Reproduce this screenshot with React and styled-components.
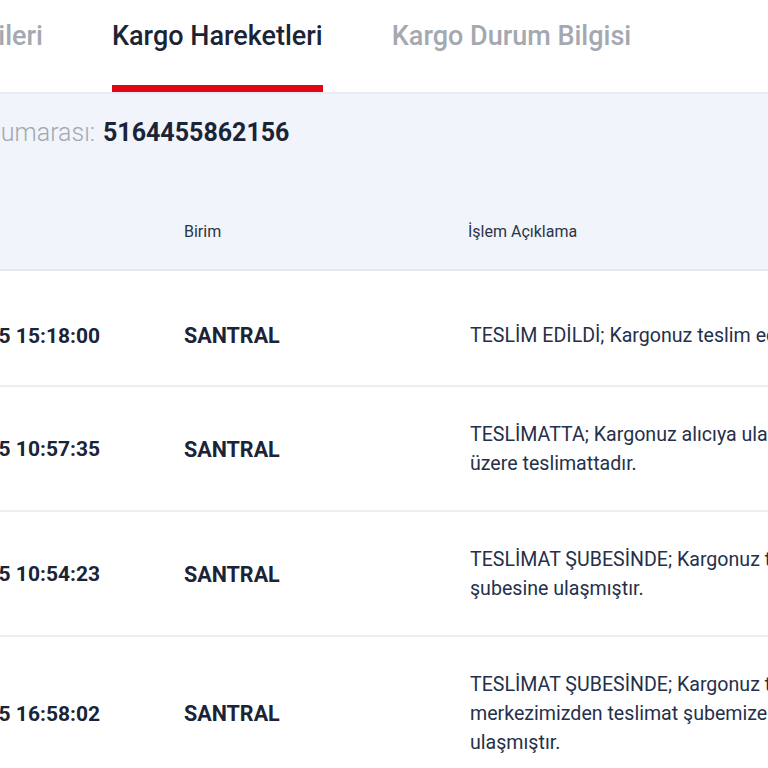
import React from "react";
import styled, { createGlobalStyle } from "styled-components";

const GlobalStyle = createGlobalStyle`
  html, body {
    margin: 0;
    padding: 0;
    background: #ffffff;
    overflow: hidden;
  }
  body {
    font-family: Roboto, "Noto Sans", sans-serif;
    color: #1b2437;
  }
`;

const Page = styled.div`
  width: 768px;
  height: 768px;
  overflow: hidden;
  display: flex;
  flex-direction: column;

  & > * {
    flex-shrink: 0;
  }
`;

const TabBar = styled.div`
  display: flex;
  gap: 69px;
  height: 92px;
  background: #ffffff;
  border-bottom: 2px solid #e8ebf1;
`;

const Tab = styled.div`
  height: 92px;
  box-sizing: border-box;
  display: flex;
  justify-content: ${(p) => (p.$cut ? "flex-end" : "flex-start")};
  width: ${(p) => (p.$cut ? "43px" : "auto")};
  padding-top: 20px;
  white-space: nowrap;
  font-size: 27px;
  font-weight: 500;
  color: ${(p) => (p.$active ? "#1b2437" : "#a3a8b1")};
  border-bottom: 7px solid ${(p) => (p.$active ? "#e10613" : "transparent")};
`;

const Summary = styled.div`
  background: #f1f4fa;
`;

const TrackingLine = styled.div`
  display: flex;
  align-items: center;
  height: 76px;
  font-size: 25px;
  white-space: nowrap;
`;

const TrackingLabel = styled.div`
  width: 95px;
  display: flex;
  justify-content: flex-end;
  color: #a3a8b1;
  font-weight: 300;
`;

const TrackingNo = styled.span`
  margin-left: 8px;
  font-weight: 700;
  color: #1b2437;
`;

const Grid = styled.div`
  display: grid;
  grid-template-columns: 100px 200px 1fr;
  column-gap: 84px;
  align-items: center;
`;

const HeadRow = styled(Grid)`
  height: 101px;
  padding-top: 24px;
  box-sizing: border-box;
  border-bottom: 2px solid #e4e8ef;
  font-size: 16px;
  color: #2b3447;
`;

const Row = styled(Grid)`
  padding: ${(p) => (p.$first ? "50px 0 35px" : "33px 0 32px")};
  border-bottom: 2px solid #eceef2;
`;

const DateCell = styled.div`
  display: flex;
  justify-content: flex-end;
  white-space: nowrap;
  font-size: 21px;
  font-weight: 700;
  color: #1b2437;
`;

const UnitCell = styled.div`
  font-size: 21.5px;
  font-weight: 700;
  color: #1b2437;
`;

const DescCell = styled.div`
  padding-left: 2px;
  font-size: 19.6px;
  line-height: 29px;
  color: #25304a;
  white-space: nowrap;
`;

const Line = styled.div``;

const rows = [
  {
    date: "10.06.2025 15:18:00",
    unit: "SANTRAL",
    lines: ["TESLİM EDİLDİ; Kargonuz teslim edilmiştir."],
  },
  {
    date: "10.06.2025 10:57:35",
    unit: "SANTRAL",
    lines: ["TESLİMATTA; Kargonuz alıcıya ulaştırılmak", "üzere teslimattadır."],
  },
  {
    date: "10.06.2025 10:54:23",
    unit: "SANTRAL",
    lines: ["TESLİMAT ŞUBESİNDE; Kargonuz teslimat", "şubesine ulaşmıştır."],
  },
  {
    date: "09.06.2025 16:58:02",
    unit: "SANTRAL",
    lines: [
      "TESLİMAT ŞUBESİNDE; Kargonuz transfer",
      "merkezimizden teslimat şubemize",
      "ulaşmıştır.",
    ],
  },
];

export default function App() {
  return (
    <Page>
      <GlobalStyle />
      <TabBar>
        <Tab $cut>Gönderi Bilgileri</Tab>
        <Tab $active>Kargo Hareketleri</Tab>
        <Tab>Kargo Durum Bilgisi</Tab>
      </TabBar>
      <Summary>
        <TrackingLine>
          <TrackingLabel>Gönderi Numarası:</TrackingLabel>
          <TrackingNo>5164455862156</TrackingNo>
        </TrackingLine>
        <HeadRow>
          <div />
          <div>Birim</div>
          <div>İşlem Açıklama</div>
        </HeadRow>
      </Summary>
      {rows.map((r, i) => (
        <Row key={r.date} $first={i === 0}>
          <DateCell>{r.date}</DateCell>
          <UnitCell>{r.unit}</UnitCell>
          <DescCell>
            {r.lines.map((l) => (
              <Line key={l}>{l}</Line>
            ))}
          </DescCell>
        </Row>
      ))}
    </Page>
  );
}
